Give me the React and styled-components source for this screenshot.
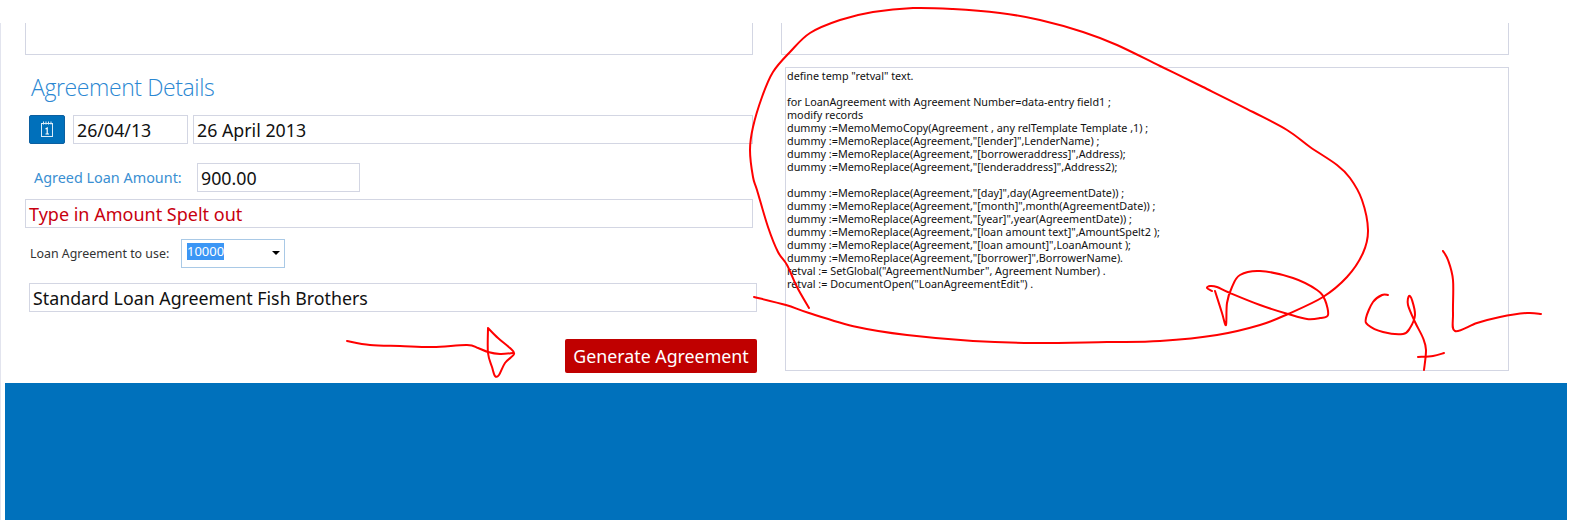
import React from "react";
import styled, { createGlobalStyle } from "styled-components";

const GlobalStyle = createGlobalStyle`
  html, body {
    margin: 0;
    padding: 0;
    background: #fff;
    font-family: "Noto Sans", "Open Sans", sans-serif;
  }
`;

const codeLines = [
  'define temp "retval" text.',
  "",
  "for LoanAgreement with Agreement Number=data-entry field1 ;",
  "modify records",
  "dummy :=MemoMemoCopy(Agreement , any relTemplate Template ,1) ;",
  'dummy :=MemoReplace(Agreement,"[lender]",LenderName) ;',
  'dummy :=MemoReplace(Agreement,"[borroweraddress]",Address);',
  'dummy :=MemoReplace(Agreement,"[lenderaddress]",Address2);',
  "",
  'dummy :=MemoReplace(Agreement,"[day]",day(AgreementDate)) ;',
  'dummy :=MemoReplace(Agreement,"[month]",month(AgreementDate)) ;',
  'dummy :=MemoReplace(Agreement,"[year]",year(AgreementDate)) ;',
  'dummy :=MemoReplace(Agreement,"[loan amount text]",AmountSpelt2 );',
  'dummy :=MemoReplace(Agreement,"[loan amount]",LoanAmount );',
  'dummy :=MemoReplace(Agreement,"[borrower]",BorrowerName).',
  'retval := SetGlobal("AgreementNumber", Agreement Number) .',
  'retval := DocumentOpen("LoanAgreementEdit") .',
];

// pen marks on top of the screenshot, in page pixels
const scribbles = [
  [[754,297],[786,305],[809,313],[857,327],[907,335],[973,341],[1033,343],[1107,342],[1160,341],[1217,335],[1260,325],[1288,314],[1323,297],[1347,277],[1363,253],[1368,230],[1362,200],[1350,178],[1337,165],[1310,147],[1287,130],[1253,112],[1203,87],[1160,66],[1117,45],[1083,32],[1040,20],[1000,13],[953,9],[913,8],[873,12],[840,20],[810,33],[790,52],[773,72],[762,97],[753,127],[750,150],[753,177],[757,190],[768,227],[778,252],[787,265],[797,287],[809,308]],
  [[1212,291],[1207,288],[1210,286],[1217,287],[1230,293],[1260,305],[1288,314],[1307,319],[1320,318],[1328,315],[1325,300],[1317,290],[1293,278],[1260,271],[1240,275],[1232,287],[1227,303],[1226,325],[1222,313],[1215,291]],
  [[1388,295],[1382,295],[1373,302],[1366,318],[1368,325],[1383,332],[1403,334],[1410,328],[1415,315],[1412,300],[1409,296],[1408,305],[1415,322],[1423,338],[1426,350],[1424,370]],
  [[1418,357],[1433,356],[1444,353]],
  [[1443,251],[1448,260],[1453,280],[1453,313],[1455,331],[1477,323],[1500,317],[1527,313],[1541,314]],
  [[347,341],[370,345],[400,346],[433,347],[467,345],[478,348],[488,352],[500,354],[513,353]],
  [[488,328],[488,353],[492,367],[495,376],[499,375],[505,363],[514,354],[510,348],[498,338],[488,328]],
];

const toPath = (pts) => {
  let d = `M${pts[0][0]} ${pts[0][1]}`;
  for (let i = 0; i < pts.length - 1; i++) {
    const p0 = pts[i - 1] || pts[i];
    const p1 = pts[i];
    const p2 = pts[i + 1];
    const p3 = pts[i + 2] || p2;
    const c1x = p1[0] + (p2[0] - p0[0]) / 6;
    const c1y = p1[1] + (p2[1] - p0[1]) / 6;
    const c2x = p2[0] - (p3[0] - p1[0]) / 6;
    const c2y = p2[1] - (p3[1] - p1[1]) / 6;
    d += ` C${c1x.toFixed(1)} ${c1y.toFixed(1)} ${c2x.toFixed(1)} ${c2y.toFixed(1)} ${p2[0]} ${p2[1]}`;
  }
  return d;
};

const Page = styled.div`
  position: relative;
  width: 1579px;
  height: 520px;
  overflow: hidden;
  padding-top: 23px;
  box-sizing: border-box;
`;

const Shell = styled.div`
  height: 497px;
  margin-right: 12px;
  padding-left: 4px;
  border-left: 1px solid #e2e4ee;
  display: flex;
  flex-direction: column;
`;

const Columns = styled.div`
  display: grid;
  grid-template-columns: 732px 728px;
  column-gap: 24px;
  margin-left: 20px;
  height: 360px;
`;

const Column = styled.div`
  display: flex;
  flex-direction: column;
`;

const TopPanel = styled.div`
  box-sizing: border-box;
  width: 728px;
  height: 32px;
  border: 1px solid #d3d6e3;
  border-top: none;
`;

const Heading = styled.h2`
  margin: 14px 0 10px 6px;
  height: 36px;
  font-family: "Open Sans", sans-serif;
  font-size: 23px;
  letter-spacing: -0.4px;
  line-height: 36px;
  font-weight: 300;
  color: #2a87d2;
`;

const Row = styled.div`
  display: flex;
  align-items: center;
  margin-left: ${({ $indent }) => $indent || 0}px;
  margin-top: ${({ $top }) => $top || 0}px;
`;

const CalendarButton = styled.button`
  box-sizing: border-box;
  width: 36px;
  height: 29px;
  padding: 0;
  margin-right: 8px;
  background: #0070bb;
  border: 1px solid #0c5fa0;
  border-radius: 2px;
  display: flex;
  align-items: center;
  justify-content: center;
`;

const Field = styled.div`
  box-sizing: border-box;
  width: ${({ $w }) => $w}px;
  height: 29px;
  margin-left: ${({ $left }) => $left || 0}px;
  padding-left: 3px;
  border: 1px solid #d3d6e3;
  font-size: ${({ $red }) => ($red ? "18px" : "17.8px")};
  line-height: 28px;
  color: ${({ $red }) => ($red ? "#c8000f" : "#111")};
  white-space: nowrap;
  overflow: hidden;
`;

const AmountLabel = styled.label`
  margin-left: 9px;
  width: 163px;
  font-size: 14.4px;
  color: #3a8fd2;
`;

const UseLabel = styled.label`
  margin-left: 5px;
  width: 151px;
  font-size: 12.4px;
  color: #333;
`;

const SelectBox = styled.div`
  box-sizing: border-box;
  position: relative;
  width: 104px;
  height: 29px;
  padding: 3px 0 0 5px;
  border: 1px solid #a9c9e6;
  font-size: 13px;
  line-height: 17px;
`;

const Selected = styled.span`
  display: inline-block;
  background: #3b96f5;
  color: #fff;
`;

const Caret = styled.span`
  position: absolute;
  right: 4px;
  top: 11px;
  border-style: solid;
  border-width: 4px 4px 0;
  border-color: #000 transparent transparent;
`;

const Actions = styled.div`
  display: flex;
  justify-content: flex-end;
  margin-top: 27px;
`;

const GenerateButton = styled.button`
  box-sizing: border-box;
  width: 192px;
  height: 34px;
  padding: 0;
  background: #c00000;
  border: none;
  border-radius: 2px;
  color: #fff;
  font-family: "Noto Sans", sans-serif;
  font-size: 17.8px;
`;

const CodeBox = styled.pre`
  box-sizing: border-box;
  width: 724px;
  height: 304px;
  margin: 12px 0 0 4px;
  padding: 1px 0 0 1px;
  border: 1px solid #d3d6e3;
  font-family: "Noto Sans", sans-serif;
  font-size: 10.8px;
  line-height: 13px;
  color: #111;
`;

const Footer = styled.div`
  flex: 1;
  background: #0071bc;
`;

const Ink = styled.svg`
  position: absolute;
  left: 0;
  top: 0;
  pointer-events: none;
`;

const CalendarIcon = () => (
  <svg width="14" height="17" viewBox="0 0 14 17" fill="none" stroke="#dcecf8" strokeWidth="1">
    <rect x="1.5" y="2.5" width="11" height="13" />
    <path d="M3.5 0.5v3M6 0.5v3M8.5 0.5v3M11 0.5v3" />
    <path d="M5.5 8l1.7-1v6M5.5 13h3.5" stroke="#fff" strokeWidth="1.2" />
  </svg>
);

const App = () => {
  return (
    <Page>
      <GlobalStyle />
      <Shell>
        <Columns>
          <Column>
            <TopPanel />
            <Heading>Agreement Details</Heading>
            <Row $indent={4}>
              <CalendarButton type="button">
                <CalendarIcon />
              </CalendarButton>
              <Field $w={115}>26/04/13</Field>
              <Field $w={560} $left={5}>26 April 2013</Field>
            </Row>
            <Row $top={19}>
              <AmountLabel>Agreed Loan Amount:</AmountLabel>
              <Field $w={163}>900.00</Field>
            </Row>
            <Row $top={7}>
              <Field $w={728} $red>Type in Amount Spelt out</Field>
            </Row>
            <Row $top={11}>
              <UseLabel>Loan Agreement to use:</UseLabel>
              <SelectBox>
                <Selected>10000</Selected>
                <Caret />
              </SelectBox>
            </Row>
            <Row $indent={4} $top={15}>
              <Field $w={728}>Standard Loan Agreement Fish Brothers</Field>
            </Row>
            <Actions>
              <GenerateButton type="button">Generate Agreement</GenerateButton>
            </Actions>
          </Column>
          <Column>
            <TopPanel />
            <CodeBox>{codeLines.join("\n")}</CodeBox>
          </Column>
        </Columns>
        <Footer />
      </Shell>
      <Ink width="1579" height="520" viewBox="0 0 1579 520" fill="none" stroke="#ff0000" strokeWidth="2" strokeLinecap="round" strokeLinejoin="round">
        {scribbles.map((pts, idx) => (
          <path key={idx} d={toPath(pts)} />
        ))}
      </Ink>
    </Page>
  );
};

export default App;
